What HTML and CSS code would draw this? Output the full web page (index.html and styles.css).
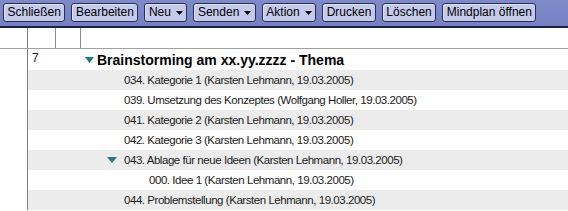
FILE: index.html
```html
<!DOCTYPE html>
<html>
<head>
<meta charset="utf-8">
<link rel="stylesheet" href="styles.css">
</head>
<body>
<div class="toolbar">
  <span class="btn">Schließen</span>
  <span class="btn">Bearbeiten</span>
  <span class="btn">Neu<svg class="caret" width="7" height="4" viewBox="0 0 7 4"><path d="M0 0h7L3.5 4z"/></svg></span>
  <span class="btn">Senden<svg class="caret" width="7" height="4" viewBox="0 0 7 4"><path d="M0 0h7L3.5 4z"/></svg></span>
  <span class="btn">Aktion<svg class="caret" width="7" height="4" viewBox="0 0 7 4"><path d="M0 0h7L3.5 4z"/></svg></span>
  <span class="btn">Drucken</span>
  <span class="btn">Löschen</span>
  <span class="btn">Mindplan öffnen</span>
</div>
<div class="header">
  <div class="hcell c1"></div>
  <div class="hcell c2"></div>
  <div class="hcell c3"></div>
  <div class="hcell rest"></div>
</div>
<div class="body">
  <div class="gutter"></div>
  <div class="list">
    <div class="row top">
      <span class="num">7</span>
      <svg class="tri" width="9" height="6" viewBox="0 0 9 6"><path d="M0 0h9L4.5 6z"/></svg>
      <span class="title">Brainstorming am xx.yy.zzzz - Thema</span>
    </div>
    <div class="row alt l1">034. Kategorie 1 (Karsten Lehmann, 19.03.2005)</div>
    <div class="row l1">039. Umsetzung des Konzeptes (Wolfgang Holler, 19.03.2005)</div>
    <div class="row alt l1">041. Kategorie 2 (Karsten Lehmann, 19.03.2005)</div>
    <div class="row l1">042. Kategorie 3 (Karsten Lehmann, 19.03.2005)</div>
    <div class="row alt l1t">
      <svg class="tri small" width="10" height="6" viewBox="0 0 10 6"><path d="M0 0h10L5 6z"/></svg>043. Ablage für neue Ideen (Karsten Lehmann, 19.03.2005)
    </div>
    <div class="row l2">000. Idee 1 (Karsten Lehmann, 19.03.2005)</div>
    <div class="row alt l1">044. Problemstellung (Karsten Lehmann, 19.03.2005)</div>
  </div>
</div>
</body>
</html>
```
FILE: styles.css
```css
html, body {
  margin: 0;
  padding: 0;
  background: #ffffff;
  font-family: "Liberation Sans", Arial, sans-serif;
  overflow: hidden;
}
.toolbar {
  height: 28px;
  box-sizing: border-box;
  padding: 3px 0 0 3px;
  background: linear-gradient(#7f8bc8, #7480c2);
  border-bottom: 2px solid #1c2148;
  display: flex;
  align-items: flex-start;
  gap: 6px;
}
.btn {
  height: 19px;
  box-sizing: border-box;
  padding: 0 3.5px;
  border: 1px solid #262d5e;
  border-radius: 3px;
  background: #c4cbea;
  box-shadow: inset 1px 1px 0 #dde2f5;
  font-size: 12px;
  line-height: 17px;
  color: #000;
  display: flex;
  align-items: center;
  white-space: nowrap;
}
.caret {
  margin-left: 5px;
  fill: #000;
}
.header {
  display: flex;
  height: 21px;
  box-sizing: border-box;
  border-bottom: 1px solid #a0a0a0;
}
.hcell {
  border-right: 1px solid #8a8a8a;
}
.c1 { width: 27px; border-right-color: #808080; }
.c2 { width: 27px; }
.c3 { width: 24px; }
.rest { flex: 1; border-right: none; }
.body {
  display: flex;
}
.gutter {
  width: 27px;
  border-right: 1px solid #808080;
}
.list {
  flex: 1;
}
.row {
  height: 20px;
  display: flex;
  align-items: center;
  font-size: 11.5px;
  letter-spacing: -0.45px;
  color: #1a1a1a;
  white-space: nowrap;
}
.row.alt { background: #ececec; }
.row.top {
  height: 21px;
  padding-left: 4px;
}
.num {
  width: 53px;
  font-size: 12px;
  letter-spacing: 0;
  align-self: flex-start;
  padding-top: 2px;
}
.tri { fill: #217a7e; flex: none; }
.row.top .tri { margin-right: 3px; }
.title {
  font-size: 14px;
  font-weight: bold;
  letter-spacing: 0;
  color: #000;
}
.l1 { padding-left: 96px; }
.l1t { padding-left: 79px; }
.l1t .tri { margin-right: 7px; }
.l2 { padding-left: 121px; }
```
